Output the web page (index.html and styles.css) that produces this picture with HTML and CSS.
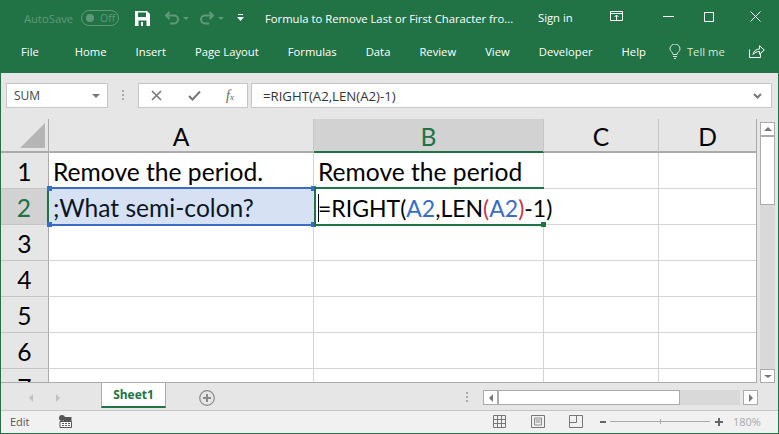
FILE: index.html
```html
<!doctype html>
<html>
	<head>
		<meta charset="UTF-8">
		<title>Formula to Remove Last or First Character</title>
		<link rel="stylesheet" href="styles.css">
	</head>
	<body>
		<div class="window">
			<!-- Title bar -->
			<div class="titlebar">
				<span class="autosave">AutoSave</span>
				<span class="toggle"><i class="knob"></i>Off</span>
				<svg class="qa-save" width="15" height="15" viewBox="0 0 15 15"><path d="M0 0h12l3 3v12H0z" fill="#fff"/><path d="M3 1.500h8v4.500H3z" fill="#217346"/><path d="M3.500 9.500h8V15h-8z" fill="#217346"/><path d="M6 11h2v4H6z" fill="#fff"/></svg>
				<svg class="qa-undo" width="16" height="14" viewBox="0 0 16 14"><path d="M5.500 1L2 4.500 5.500 8M2 4.500h8a4 4 0 0 1 0 8H6" fill="none" stroke="#5f9a78" stroke-width="2"/></svg>
				<span class="caret-dim"></span>
				<svg class="qa-redo" width="16" height="14" viewBox="0 0 16 14"><path d="M10.500 1L14 4.500 10.500 8M14 4.500H6a4 4 0 0 0 0 8h4" fill="none" stroke="#5f9a78" stroke-width="2"/></svg>
				<span class="caret-dim"></span>
				<svg class="qa-more" width="7" height="8" viewBox="0 0 7 8"><path d="M1 0h5v1H1z" fill="#fff"/><path d="M0 3h7L3.500 7z" fill="#fff"/></svg>
				<span class="doc-title">Formula to Remove Last or First Character fro...</span>
				<span class="sign-in">Sign in</span>
				<svg class="win-ribbon" width="14" height="11" viewBox="0 0 14 11"><path d="M.5.500h12v9H.5zM.5 2.500h12M6.500 9V4.500M4.500 6l2-2 2 2" fill="none" stroke="#fff"/></svg>
				<svg class="win-min" width="11" height="1" viewBox="0 0 11 1"><path d="M0 0h11v1H0z" fill="#fff"/></svg>
				<svg class="win-max" width="10" height="10" viewBox="0 0 10 10"><path d="M.5.500h9v9h-9z" fill="none" stroke="#fff"/></svg>
				<svg class="win-close" width="11" height="11" viewBox="0 0 11 11"><path d="M.5.500l10 10M10.500.500l-10 10" fill="none" stroke="#fff"/></svg>
			</div>

			<!-- Ribbon tabs -->
			<div class="tabs">
				<span class="tab tab-file">File</span>
				<span class="tab tab-home">Home</span>
				<span class="tab">Insert</span>
				<span class="tab">Page Layout</span>
				<span class="tab">Formulas</span>
				<span class="tab">Data</span>
				<span class="tab">Review</span>
				<span class="tab">View</span>
				<span class="tab">Developer</span>
				<span class="tab">Help</span>
				<svg class="bulb" width="12" height="15" viewBox="0 0 12 15"><path d="M4 10.500C4 8 1 7.500 1 5a5 5 0 0 1 10 0c0 2.500-3 3-3 5.500zM4 12.500h4M5 14.500h2" fill="none" stroke="#d6e6dc"/></svg>
				<span class="tell-me">Tell me</span>
				<svg class="share" width="16" height="13" viewBox="0 0 16 13"><path d="M.5 4.500v8h11V9M4 9.500C4.500 6 7.500 4 10.500 4V.8L15.300 5l-4.800 4.200V6.500C8 6.500 5.500 7.500 4 9.500z" fill="none" stroke="#fff"/></svg>
			</div>

			<!-- Name box and formula bar -->
			<div class="formula-bar">
				<div class="name-box"><span>SUM</span><i class="arrow-down"></i></div>
				<div class="grip"></div>
				<div class="fx-box">
					<svg width="11" height="11" viewBox="0 0 11 11"><path d="M1 1l9 9M10 1l-9 9" fill="none" stroke="#777" stroke-width="1.600"/></svg>
					<svg width="13" height="11" viewBox="0 0 13 11"><path d="M1 6l3.500 3.500L12 1.500" fill="none" stroke="#777" stroke-width="2"/></svg>
					<span class="fx">f<sub>x</sub></span>
				</div>
				<div class="formula-input">
					<span class="formula-text">=RIGHT(A2,LEN(A2)-1)</span>
					<svg width="9" height="6" viewBox="0 0 9 6"><path d="M1 1l3.500 3.500L8 1" fill="none" stroke="#777" stroke-width="2"/></svg>
				</div>
			</div>

			<!-- Sheet -->
			<div class="sheet-area">
				<div class="sheet">
					<div class="corner"><i class="corner-mark"></i></div>
					<div class="col-head">A</div>
					<div class="col-head col-active">B</div>
					<div class="col-head">C</div>
					<div class="col-head">D</div>

					<div class="row-head">1</div>
					<div class="cell">Remove the period.</div>
					<div class="cell">Remove the period</div>
					<div class="cell"></div>
					<div class="cell"></div>

					<div class="row-head row-active">2</div>
					<div class="cell cell-ref">;What semi-colon?
						<i class="handle h-tl"></i><i class="handle h-tr"></i><i class="handle h-bl"></i><i class="handle h-br"></i>
					</div>
					<div class="cell cell-edit"><span class="edit-text"><span class="edit-caret"></span>=RIGHT(<span class="ref-blue">A2</span>,LEN<span class="ref-red">(</span><span class="ref-blue">A2</span><span class="ref-red">)</span>-1)</span><i class="fill-handle"></i></div>
					<div class="cell"></div>
					<div class="cell"></div>

					<div class="row-head">3</div>
					<div class="cell"></div><div class="cell"></div><div class="cell"></div><div class="cell"></div>
					<div class="row-head">4</div>
					<div class="cell"></div><div class="cell"></div><div class="cell"></div><div class="cell"></div>
					<div class="row-head">5</div>
					<div class="cell"></div><div class="cell"></div><div class="cell"></div><div class="cell"></div>
					<div class="row-head">6</div>
					<div class="cell"></div><div class="cell"></div><div class="cell"></div><div class="cell"></div>
					<div class="row-head">7</div>
					<div class="cell"></div><div class="cell"></div><div class="cell"></div><div class="cell"></div>
				</div>
				<div class="vscroll">
					<div class="sb-btn"><i class="arrow-up"></i></div>
					<div class="sb-thumb"></div>
					<div class="sb-track"></div>
					<div class="sb-btn"><i class="arrow-down small"></i></div>
				</div>
			</div>

			<!-- Sheet tabs -->
			<div class="tabbar">
				<i class="nav-left"></i>
				<i class="nav-right"></i>
				<div class="sheet-tab">Sheet1</div>
				<svg class="add-sheet" width="16" height="16" viewBox="0 0 16 16"><circle cx="8" cy="8" r="7.300" fill="none" stroke="#8a8a8a" stroke-width="1.200"/><path d="M4 8h8M8 4v8" stroke="#8a8a8a" stroke-width="2"/></svg>
				<div class="grip tab-grip"></div>
				<div class="hscroll">
					<div class="sb-btn"><i class="nav-left dark"></i></div>
					<div class="sb-thumb-h"></div>
					<div class="sb-track-h"></div>
					<div class="sb-btn"><i class="nav-right dark"></i></div>
				</div>
			</div>

			<!-- Status bar -->
			<div class="statusbar">
				<span class="mode">Edit</span>
				<svg class="macro" width="13" height="13" viewBox="0 0 13 13"><circle cx="3" cy="3" r="3" fill="#555"/><path d="M1 6.500h11.500v6H1z" fill="#fff" stroke="#555"/><path d="M5 2h7.500v4H5z" fill="#555"/><path d="M3 8.500h2M6 8.500h2M9 8.500h2M3 10.500h2M6 10.500h2M9 10.500h2" stroke="#555"/></svg>
				<svg class="view-normal" width="13" height="13" viewBox="0 0 13 13"><path d="M.5.500h12v12H.5zM.5 4.500h12M.5 8.500h12M4.500.5v12M8.500.5v12" fill="none" stroke="#777"/></svg>
				<svg class="view-page" width="14" height="13" viewBox="0 0 14 13"><path d="M.5.500h13v12H.5z" fill="none" stroke="#777"/><path d="M3.500 3h7v7h-7zM4.500 5h5M4.500 7h5" fill="none" stroke="#777" stroke-width=".8"/></svg>
				<svg class="view-break" width="14" height="13" viewBox="0 0 14 13"><path d="M.5.500h13v12H.5zM.5 7.500h7V.5" fill="none" stroke="#777"/></svg>
				<i class="zoom-minus"></i>
				<div class="zoom-track"><i class="zoom-tick"></i></div>
				<svg class="zoom-plus" width="8" height="8" viewBox="0 0 8 8"><path d="M0 3h8v2H0zM3 0h2v8H3z" fill="#666"/></svg>
				<span class="zoom-val">180%</span>
			</div>
		</div>
	</body>
</html>
```

FILE: styles.css
```css
* {
	box-sizing: border-box;
}
body {
	margin: 0;
	overflow: hidden;
	font-family: "Open Sans", "Noto Sans", sans-serif;
}
svg, i {
	display: block;
	flex: none;
}
span {
	white-space: nowrap;
}
div.window {
	width: 779px;
	height: 434px;
	display: flex;
	flex-direction: column;
	border: 1px solid #217346;
	border-top: none;
	background-color: #e6e6e6;
}

/* title bar */
div.titlebar {
	height: 36px;
	display: flex;
	align-items: center;
	background-color: #217346;
	color: #fff;
	font-size: 11.25px;
}
span.autosave {
	width: 49px;
	margin-left: 23px;
	color: #5f9a78;
}
span.toggle {
	flex: none;
	width: 38px;
	height: 16px;
	margin-left: 8px;
	padding-left: 18px;
	display: flex;
	align-items: center;
	position: relative;
	border: 1px solid #5f9a78;
	border-radius: 8px;
	color: #5f9a78;
	font-size: 10.5px;
}
i.knob {
	position: absolute;
	left: 4px;
	top: 3px;
	width: 8px;
	height: 8px;
	border-radius: 50%;
	background-color: #5f9a78;
}
svg.qa-save {
	margin-left: 16px;
}
svg.qa-undo {
	margin-left: 14px;
}
svg.qa-redo {
	margin-left: 10px;
}
span.caret-dim {
	flex: none;
	margin-left: 3px;
	border-top: 3px solid #5f9a78;
	border-left: 3px solid transparent;
	border-right: 3px solid transparent;
}
svg.qa-more {
	margin-left: 13px;
}
span.doc-title {
	width: 248px;
	margin-left: 21px;
}
span.sign-in {
	width: 36px;
	margin-left: 25px;
	margin-top: -2px;
}
svg.win-ribbon {
	margin-left: 36px;
	margin-top: -3px;
}
svg.win-min {
	margin-left: 39px;
	margin-top: -3px;
}
svg.win-max {
	margin-left: 30px;
	margin-top: -3px;
}
svg.win-close {
	margin-left: 36px;
	margin-top: -3px;
}

/* ribbon tabs */
div.tabs {
	height: 37px;
	padding-bottom: 6px;
	display: flex;
	align-items: center;
	background-color: #217346;
	color: #fff;
	font-size: 11.25px;
}
span.tab {
	margin-left: 29px;
}
span.tab-file {
	margin-left: 20px;
}
span.tab-home {
	margin-left: 36px;
}
svg.bulb {
	margin-left: 23px;
}
span.tell-me {
	margin-left: 6px;
	color: #d6e6dc;
}
svg.share {
	margin-left: 24px;
}

/* formula bar */
div.formula-bar {
	height: 46px;
	padding: 10px 6px 11px 5px;
	display: flex;
	align-items: stretch;
	background-color: #e6e6e6;
	font-size: 12px;
	color: #444;
}
div.name-box {
	width: 102px;
	padding: 0 7px;
	display: flex;
	align-items: center;
	justify-content: space-between;
	background-color: #fff;
	border: 1px solid #c6c6c6;
}
i.arrow-down {
	border-top: 4px solid #777;
	border-left: 4px solid transparent;
	border-right: 4px solid transparent;
}
i.arrow-down.small {
	border-top-width: 3px;
}
i.arrow-up {
	border-bottom: 4px solid #777;
	border-left: 4px solid transparent;
	border-right: 4px solid transparent;
}
div.grip {
	width: 2px;
	margin: 7px 14px 6px 14px;
	background-image: linear-gradient(#aaa 2px, transparent 2px);
	background-size: 2px 4px;
}
div.fx-box {
	width: 110px;
	padding: 0 12px;
	display: flex;
	align-items: center;
	justify-content: space-between;
	background-color: #fff;
	border: 1px solid #c6c6c6;
}
span.fx {
	margin-right: 1px;
	font-family: "Liberation Serif", serif;
	font-style: italic;
	font-size: 14px;
	color: #666;
}
span.fx sub {
	font-size: 9px;
	vertical-align: baseline;
}
div.formula-input {
	flex: 1;
	margin-left: 3px;
	padding: 0 9px 0 11px;
	display: flex;
	align-items: center;
	justify-content: space-between;
	background-color: #fff;
	border: 1px solid #c6c6c6;
}
span.formula-text {
	font-size: 13.2px;
	color: #333;
}

/* sheet */
div.sheet-area {
	height: 264px;
	display: flex;
	align-items: stretch;
}
div.sheet {
	width: 756px;
	overflow: hidden;
	display: grid;
	grid-template-columns: 48px 265px 230px 115px 98px;
	grid-template-rows: 34px repeat(7, 36px);
	background-color: #fff;
	border-bottom: 1px solid #ababab;
	border-right: 1px solid #ababab;
	font-family: Lato, "Open Sans", sans-serif;
	font-size: 24.6px;
	color: #000;
}
div.corner {
	padding: 4px 2px 0 11px;
	background-color: #e6e6e6;
	border-right: 1px solid #ababab;
	border-bottom: 2px solid #ababab;
}
i.corner-mark {
	width: 0;
	height: 0;
	margin-left: 8px;
	border-bottom: 25px solid #b5b5b5;
	border-left: 25px solid transparent;
}
div.col-head {
	padding-top: 2px;
	display: flex;
	align-items: center;
	justify-content: center;
	background-color: #e6e6e6;
	border-right: 1px solid #c6c6c6;
	border-bottom: 2px solid #ababab;
}
div.col-active {
	background-color: #d2d2d2;
	border-bottom: 2px solid #217346;
	color: #217346;
}
div.row-head {
	padding-top: 2px;
	display: flex;
	align-items: center;
	justify-content: center;
	background-color: #e6e6e6;
	border-right: 1px solid #ababab;
	border-bottom: 1px solid #c6c6c6;
}
div.row-active {
	background-color: #d2d2d2;
	border-right: 2px solid #217346;
	color: #217346;
}
div.cell {
	padding: 2px 0 0 4px;
	display: flex;
	align-items: center;
	white-space: nowrap;
	border-right: 1px solid #d4d4d4;
	border-bottom: 1px solid #d4d4d4;
}

/* formula references sit on the gridlines around the cell */
div.cell-ref {
	position: relative;
	margin: -2px 0 -1px;
	background-color: #d6e2f3;
	border: 2px solid #3a6cc4;
	border-left: none;
	border-right: none;
	color: #0b1526;
}
i.handle {
	position: absolute;
	width: 5px;
	height: 5px;
	background-color: #3a6cc4;
}
i.h-tl { left: -2px; top: -3px; }
i.h-tr { right: -2px; top: -3px; }
i.h-bl { left: -2px; bottom: -3px; }
i.h-br { right: -2px; bottom: -3px; }
div.cell-edit {
	position: relative;
	z-index: 1;
	margin: -2px 0 -1px;
	padding-left: 2px;
	border-top: 2px solid #217346;
	border-bottom: 2px solid #217346;
	border-left: 2px solid #217346;
	border-right: none;
	font-size: 23px;
}
span.edit-text {
	position: relative;
}
span.edit-caret {
	position: absolute;
	left: 0;
	top: 0;
	bottom: 0;
	border-left: 1px solid #000;
}
span.ref-blue {
	color: #3a6cc4;
}
span.ref-red {
	color: #c8344a;
}
i.fill-handle {
	position: absolute;
	right: -2px;
	bottom: -3px;
	width: 5px;
	height: 5px;
	background-color: #217346;
}

/* scrollbars */
div.vscroll {
	width: 15px;
	margin: 3px 0 0 3px;
	display: flex;
	flex-direction: column;
}
div.sb-btn {
	flex: none;
	width: 15px;
	height: 15px;
	display: flex;
	align-items: center;
	justify-content: center;
	background-color: #fff;
	border: 1px solid #ababab;
}
div.vscroll div.sb-btn {
	height: 14px;
}
div.sb-thumb {
	height: 69px;
	background-color: #fff;
	border: 1px solid #ababab;
}
div.sb-track {
	flex: 1;
	background-color: #d9d9d9;
}

/* sheet tabs */
div.tabbar {
	height: 28px;
	display: flex;
	align-items: flex-start;
	border-bottom: 1px solid #c6c6c6;
}
i.nav-left {
	margin: 11px 0 0 28px;
	border-right: 4px solid #c0c0c0;
	border-top: 4px solid transparent;
	border-bottom: 4px solid transparent;
}
i.nav-right {
	margin: 11px 0 0 23px;
	border-left: 4px solid #c0c0c0;
	border-top: 4px solid transparent;
	border-bottom: 4px solid transparent;
}
i.nav-left.dark, i.nav-right.dark {
	margin: 0;
	border-left-color: #777;
	border-right-color: #777;
}
div.sheet-tab {
	width: 65px;
	height: 25px;
	margin-left: 41px;
	display: flex;
	align-items: center;
	justify-content: center;
	background-color: #fff;
	border: 1px solid #ababab;
	border-top: none;
	border-bottom: 2px solid #217346;
	color: #217346;
	font-size: 12px;
	font-weight: bold;
}
svg.add-sheet {
	margin: 7px 0 0 33px;
}
div.tab-grip {
	height: 11px;
	margin: 9px 0 0 251px;
}
div.hscroll {
	width: 275px;
	margin: 7px 0 0 15px;
	display: flex;
}
div.sb-thumb-h {
	width: 182px;
	background-color: #fff;
	border: 1px solid #ababab;
}
div.sb-track-h {
	flex: 1;
	margin-right: 3px;
	background-color: #d9d9d9;
}

/* status bar */
div.statusbar {
	flex: 1;
	padding-bottom: 1px;
	display: flex;
	align-items: center;
	background-color: #f1f1f1;
	font-size: 11px;
	color: #555;
}
span.mode {
	width: 20px;
	margin-left: 9px;
}
svg.macro {
	margin-left: 29px;
}
svg.view-normal {
	margin-left: 421px;
}
svg.view-page {
	margin-left: 25px;
}
svg.view-break {
	margin-left: 24px;
}
i.zoom-minus {
	width: 6px;
	height: 2px;
	margin-left: 17px;
	background-color: #666;
}
div.zoom-track {
	flex: none;
	width: 100px;
	height: 1px;
	margin-left: 4px;
	position: relative;
	background-color: #aaa;
}
i.zoom-tick {
	position: absolute;
	left: 50px;
	top: -2px;
	width: 1px;
	height: 5px;
	background-color: #aaa;
}
svg.zoom-plus {
	margin-left: 5px;
}
span.zoom-val {
	margin-left: 10px;
	color: #aaa;
}
```
